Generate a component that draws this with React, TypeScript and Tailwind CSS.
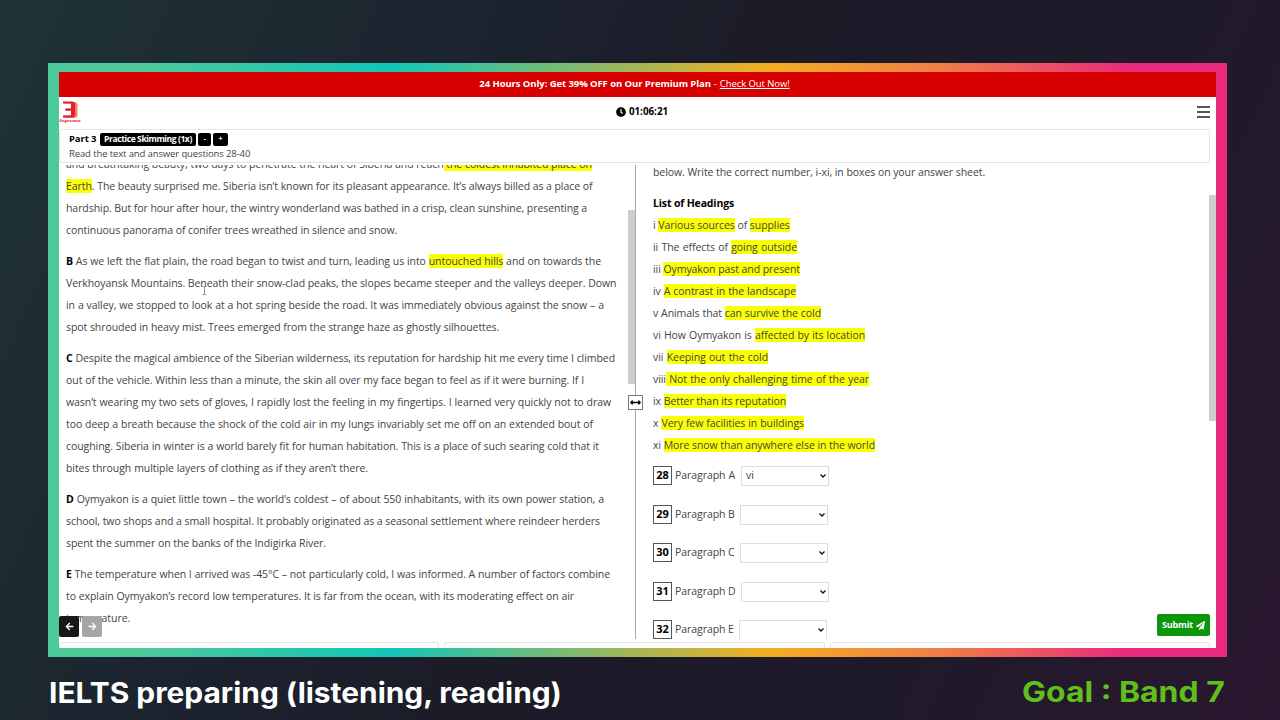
import React from 'react';
import { FaArrowLeft, FaArrowRight, FaArrowsAltH, FaClock, FaPaperPlane } from 'react-icons/fa';

interface Line {
  text: string;
  width: number;
  lead?: string;
}

// Text between asterisks is highlighted
const passage: Line[][] = [
  [
    { text: 'and breathtaking beauty, two days to penetrate the heart of Siberia and reach* the coldest inhabited place on*', width: 526 },
    { text: '*Earth*. The beauty surprised me. Siberia isn’t known for its pleasant appearance. It’s always billed as a place of', width: 526 },
    { text: 'hardship. But for hour after hour, the wintry wonderland was bathed in a crisp, clean sunshine, presenting a', width: 518 },
    { text: 'continuous panorama of conifer trees wreathed in silence and snow.', width: 329 },
  ],
  [
    { lead: 'B', text: 'As we left the flat plain, the road began to twist and turn, leading us into *untouched hills* and on towards the', width: 535 },
    { text: 'Verkhoyansk Mountains. Beneath their snow-clad peaks, the slopes became steeper and the valleys deeper. Down', width: 549 },
    { text: 'in a valley, we stopped to look at a hot spring beside the road. It was immediately obvious against the snow – a', width: 538 },
    { text: 'spot shrouded in heavy mist. Trees emerged from the strange haze as ghostly silhouettes.', width: 432 },
  ],
  [
    { lead: 'C', text: 'Despite the magical ambience of the Siberian wilderness, its reputation for hardship hit me every time I climbed', width: 549 },
    { text: 'out of the vehicle. Within less than a minute, the skin all over my face began to feel as if it were burning. If I', width: 518 },
    { text: 'wasn’t wearing my two sets of gloves, I rapidly lost the feeling in my fingertips. I learned very quickly not to draw', width: 545 },
    { text: 'too deep a breath because the shock of the cold air in my lungs invariably set me off on an extended bout of', width: 527 },
    { text: 'coughing. Siberia in winter is a world barely fit for human habitation. This is a place of such searing cold that it', width: 533 },
    { text: 'bites through multiple layers of clothing as if they aren’t there.', width: 302 },
  ],
  [
    { lead: 'D', text: 'Oymyakon is a quiet little town – the world’s coldest – of about 550 inhabitants, with its own power station, a', width: 538 },
    { text: 'school, two shops and a small hospital. It probably originated as a seasonal settlement where reindeer herders', width: 533 },
    { text: 'spent the summer on the banks of the Indigirka River.', width: 260 },
  ],
  [
    { lead: 'E', text: 'The temperature when I arrived was -45°C – not particularly cold, I was informed. A number of factors combine', width: 544 },
    { text: 'to explain Oymyakon’s record low temperatures. It is far from the ocean, with its moderating effect on air', width: 508 },
    { text: 'temperature.', width: 62 },
  ],
];

const headings: Line[] = [
  { text: 'i *Various sources* of *supplies*', width: 136 },
  { text: 'ii The effects of *going outside*', width: 144 },
  { text: 'iii *Oymyakon past and present*', width: 147 },
  { text: 'iv *A contrast in the landscape*', width: 143 },
  { text: 'v Animals that *can survive the cold*', width: 168 },
  { text: 'vi How Oymyakon is *affected by its location*', width: 212 },
  { text: 'vii *Keeping out the cold*', width: 115 },
  { text: 'viii* Not the only challenging time of the year*', width: 216 },
  { text: 'ix *Better than its reputation*', width: 132 },
  { text: 'x *Very few facilities in buildings*', width: 151 },
  { text: 'xi *More snow than anywhere else in the world*', width: 222 },
];

const questions = [
  { number: 28, label: 'Paragraph A', answer: 'vi', labelWidth: 60 },
  { number: 29, label: 'Paragraph B', answer: '', labelWidth: 59 },
  { number: 30, label: 'Paragraph C', answer: '', labelWidth: 59 },
  { number: 31, label: 'Paragraph D', answer: '', labelWidth: 60 },
  { number: 32, label: 'Paragraph E', answer: '', labelWidth: 58 },
];

function TextLine({ line }: { line: Line }) {
  return (
    <div
      className="h-[22px] whitespace-nowrap leading-[22px] [text-align-last:justify]"
      style={{ width: line.width }}
    >
      {line.lead && <b className="text-black">{line.lead} </b>}
      {line.text.split('*').map((part, i) =>
        i % 2 === 1 ? (
          <span key={i} className="bg-[#fbff05]">{part}</span>
        ) : (
          part
        )
      )}
    </div>
  );
}

function Logo() {
  return (
    <svg viewBox="0 0 21 22" className="h-[22px] w-[22px]">
      <path d="M5 1h9.500q3.500 0 3.500 3v10q0 3-3.500 3H5" fill="#f4805c" />
      <path d="M3.500 0.500h9q3 0 3 3v10q0 3-3 3h-9v-2.200h8V9.800H6V7.400h5.500V2.700h-8z" fill="#e0203a" />
      <path d="M3 2.700h8.500v4.700H6v2.400h5.500v4.500H3z" fill="#fff" />
      <path d="M6 7.600h6v1.900H6z" fill="#e0203a" />
      <text x="0" y="20.500" fontSize="4" fontWeight="700" textLength="21" fill="#e0203a" fontFamily="Open Sans">
        Engnovate
      </text>
    </svg>
  );
}

function QuestionRow({ question }: { question: (typeof questions)[number] }) {
  return (
    <div className="flex h-[38.500px] items-start">
      <div className="flex h-[19px] w-[19px] items-center justify-center border border-[#555] text-[11px] font-bold text-black">
        {question.number}
      </div>
      <div
        className="ml-[3px] whitespace-nowrap leading-[19px] [text-align-last:justify]"
        style={{ width: question.labelWidth }}
      >
        {question.label}
      </div>
      <div className="ml-1.5 flex h-5 w-[88px] items-center justify-between border border-[#dcdfe2] pr-0.5 pl-1">
        <span>{question.answer}</span>
        <svg viewBox="0 0 6 4" className="h-1 w-1.5" fill="none" stroke="#111" strokeWidth="1.300">
          <path d="M0.500 0.500 3 3 5.500 0.500" />
        </svg>
      </div>
    </div>
  );
}

export default function App() {
  return (
    <div className="h-[720px] w-[1280px] overflow-hidden bg-[linear-gradient(115deg,#1f3334_0%,#1c2630_25%,#1c1b28_50%,#1f1a2a_75%,#2a172f_100%)] pt-[63px] font-['Open_Sans','Noto_Sans',sans-serif]">
      <div className="ml-12 h-[594px] w-[1179px] bg-[linear-gradient(90deg,#4dc99a_8%,#12c6b8_29%,#f3ae22_61%,#f07c48_76%,#e8297c_92%)] pt-[9px] pr-[11px] pb-[9px] pl-[11px]">
        <div className="relative flex h-full flex-col overflow-hidden bg-white text-[10.500px] tracking-[-0.065px] text-[#444]">
          {/* Promo banner */}
          <div className="flex h-[25px] shrink-0 items-center justify-center gap-[3px] bg-[#d60000] pr-1.5 text-[9.500px] tracking-[-0.080px] text-white">
            <b>24 Hours Only: Get 39% OFF on Our Premium Plan</b>
            <span>-</span>
            <span className="underline">Check Out Now!</span>
          </div>

          {/* Timer bar */}
          <div className="flex h-8 shrink-0 items-center justify-between pr-1.5 pb-0.5">
            <Logo />
            <div className="ml-1.5 flex items-center gap-[3px] text-[9.800px] font-bold tracking-normal text-black">
              <FaClock className="h-2.5 w-2.5" />
              01:06:21
            </div>
            <div className="flex w-[13px] flex-col gap-[3px]">
              <div className="h-[2px] bg-[#555]" />
              <div className="h-[2px] bg-[#555]" />
              <div className="h-[2px] bg-[#555]" />
            </div>
          </div>

          {/* Part info */}
          <div className="mr-[6px] h-[34px] shrink-0 rounded-[3px] border border-[#e2e4e6] pt-[3px] pl-[9px] text-[9.500px] tracking-[-0.120px]">
            <div className="flex h-[13px] items-center gap-[2px] whitespace-nowrap font-bold text-black">
              <span className="w-[29px]">Part 3</span>
              <span className="flex h-[13px] w-[96px] items-center justify-center rounded-[2px] bg-black text-[8.500px] tracking-[-0.400px] text-white">Practice Skimming (1x)</span>
              <span className="flex h-[13px] w-[13px] items-center justify-center rounded-[2px] bg-black text-[7px] text-white">-</span>
              <span className="flex h-[13px] w-[15px] items-center justify-center rounded-[2px] bg-black text-[7px] text-white">+</span>
            </div>
            <div className="mt-px leading-[14px]">Read the text and answer questions 28-40</div>
          </div>

          {/* Reading passage and questions */}
          <div className="mt-[2px] flex h-[474px] shrink-0 overflow-hidden">
            <div className="flex h-full w-[577px] justify-between overflow-hidden border-r border-[#aaa]">
              <div className="-mt-3 flex flex-col gap-[9px] pl-[7px]">
                {passage.map((lines, i) => (
                  <div key={i}>
                    {lines.map((line) => (
                      <TextLine key={line.text} line={line} />
                    ))}
                  </div>
                ))}
              </div>
              <div className="mt-[45px] h-[174px] w-[7px] bg-[#cdcdcd]" />
            </div>
            <div className="flex min-w-0 flex-1 justify-between overflow-hidden">
              <div className="-mt-1 pl-[17px]">
                <TextLine line={{ text: 'below. Write the correct number, i-xi, in boxes on your answer sheet.', width: 332 }} />
                <div className="mt-[9px] h-[22px] leading-[22px] font-bold tracking-[-0.150px] text-black">List of Headings</div>
                {headings.map((line) => (
                  <TextLine key={line.text} line={line} />
                ))}
                <div className="mt-[10px]">
                  {questions.map((q) => (
                    <QuestionRow key={q.number} question={q} />
                  ))}
                </div>
              </div>
              <div className="mt-[30px] h-[226px] w-[7px] bg-[#cdcdcd]" />
            </div>
          </div>

          {/* Part tabs, cut off by the bottom of the window */}
          <div className="mt-[3px] mr-[6px] flex h-3 shrink-0 gap-[5px]">
            <div className="flex-1 rounded-[3px] border border-[#e4dfe2]" />
            <div className="flex-1 rounded-[3px] border border-[#e4dfe2]" />
            <div className="flex-1 rounded-[3px] border border-[#e4dfe2]" />
          </div>

          {/* Floating controls */}
          <div className="absolute top-[544px] left-0 flex gap-[3px] text-white">
            <div className="flex h-[21px] w-5 items-center justify-center rounded-[2px] bg-[#181818]"><FaArrowLeft className="h-[9px] w-[9px]" /></div>
            <div className="flex h-[21px] w-5 items-center justify-center rounded-[2px] bg-[#a6a6a6]"><FaArrowRight className="h-[9px] w-[9px]" /></div>
          </div>
          <div className="absolute top-[323px] left-[569px] flex h-[15px] w-[15px] items-center justify-center border border-[#777] bg-white text-black">
            <FaArrowsAltH className="h-[11px] w-[11px]" />
          </div>
          <div className="absolute top-[542px] right-[6px] flex h-[22px] w-[53px] items-center justify-center gap-[3px] rounded-[2px] bg-[#0b960b] text-[9px] font-bold tracking-[-0.150px] text-white">
            Submit
            <FaPaperPlane className="h-[9px] w-[9px]" />
          </div>
          {/* Text cursor */}
          <svg viewBox="0 0 5 9" className="absolute top-[214px] left-[143px] h-[9px] w-[5px]" fill="none" stroke="#777" strokeWidth="0.800">
            <path d="M0.500 0.500H2L2.500 1 3 0.500H4.500M2.500 1V8M0.500 8.500H2L2.500 8 3 8.500H4.500" />
          </svg>
        </div>
      </div>

      {/* Captions */}
      <div className="flex justify-between pt-[18px] pr-[55px] pl-[49px] font-['Inter',sans-serif] text-[28px] leading-[36px] font-bold">
        <div className="origin-left scale-x-[1.067] text-white">IELTS preparing (listening, reading)</div>
        <div className="-mt-px origin-right scale-x-[1.140] text-[#5fc01b]">Goal : Band 7</div>
      </div>
    </div>
  );
}
